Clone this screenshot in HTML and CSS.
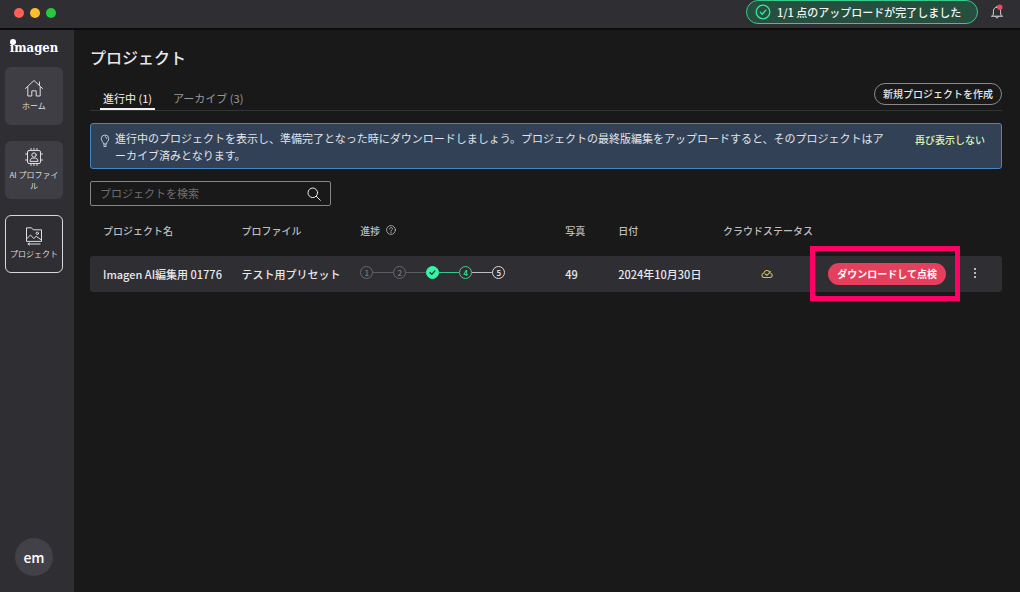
FILE: index.html
```html
<!DOCTYPE html>
<html lang="ja">
<head>
<meta charset="utf-8">
<meta name="viewport" content="width=device-width, initial-scale=1">
<title>プロジェクト - imagen</title>
<link rel="stylesheet" href="styles.css">
</head>
<body class="app">
<header class="titlebar">
  <div class="window-controls">
    <button class="dot dot-close" aria-label="閉じる"></button>
    <button class="dot dot-min" aria-label="最小化"></button>
    <button class="dot dot-max" aria-label="最大化"></button>
  </div>
  <div class="status" role="status">
    <svg class="status-icon" viewBox="0 0 16 16"><circle cx="8" cy="8" r="6.8"/><path d="M5.3 8.3l1.9 1.9 3.6-4"/></svg>
    <span>1/1 点のアップロードが完了しました</span>
  </div>
  <button class="bell" aria-label="通知">
    <svg viewBox="0 0 14 16"><path d="M7 2.2v1M1.5 12.2h11M2.6 12c.8-1 .8-2.400.8-4.600C3.400 4.800 4.900 3.200 7 3.200s3.600 1.600 3.600 4.200c0 2.200 0 3.600.8 4.600M5.600 12.600c.1 1.800 2.700 1.800 2.800 0"/><circle class="bell-dot" cx="9.800" cy="3.200" r="2.700"/></svg>
  </button>
</header>
<div class="shell">
  <nav class="sidebar">
    <div class="logo">imagen</div>
    <a class="nav-item" href="#home">
      <svg class="nav-icon" viewBox="0 0 20 20"><path d="M1.500 10.500L10 2.500l8.500 8M15.500 7.500V4M3.800 8.800V18h4v-5.200h4.400V18h4V8.800"/></svg>
      <span>ホーム</span>
    </a>
    <a class="nav-item" href="#profiles">
      <svg class="nav-icon" viewBox="0 0 20 20"><rect x="3.500" y="3.500" width="13" height="13" rx="1.500"/><path d="M7 1.500v2M10 1.500v2M13 1.500v2M7 16.500v2M10 16.500v2M13 16.500v2M1.500 7h2M1.500 13h2M16.500 7h2M16.500 13h2M6 14c0-1.900 1.300-3 4-3s4 1.100 4 3z"/><circle cx="10" cy="8" r="2.200"/></svg>
      <span>AI プロファイル</span>
    </a>
    <a class="nav-item nav-current" href="#projects" aria-current="page">
      <svg class="nav-icon" viewBox="0 0 20 20"><path d="M2.500 15V1.800h5l1.700 2h8.300V15zM2.500 13l4-4 3.200 3.500 2.500-2.200 5.300 3.700M4 18h12M5.500 17L4 18l1.500 1"/><circle cx="13.300" cy="7.300" r="1.200"/></svg>
      <span>プロジェクト</span>
    </a>
    <button class="avatar" aria-label="アカウント em">em</button>
  </nav>
  <main class="main">
    <h1 class="title">プロジェクト</h1>
    <div class="toolbar">
      <div class="tabs">
        <a class="tab tab-current" href="#active" aria-current="true">進行中 (1)</a>
        <a class="tab" href="#archive">アーカイブ (3)</a>
      </div>
      <button class="create">新規プロジェクトを作成</button>
    </div>
    <section class="notice">
      <svg class="bulb" viewBox="0 0 10 14"><path d="M3.400 9.500C3.400 8 1.300 7 1.300 4.700a3.700 3.700 0 0 1 7.400 0C8.700 7 6.600 8 6.600 9.500zM3.500 11h3M4 12.500h2M5.200 2.800c1 .2 1.500.8 1.600 1.700"/></svg>
      <p class="notice-text">進行中のプロジェクトを表示し、準備完了となった時にダウンロードしましょう。プロジェクトの最終版編集をアップロードすると、そのプロジェクトはアーカイブ済みとなります。</p>
      <button class="dismiss">再び表示しない</button>
    </section>
    <form class="search">
      <input class="search-input" type="search" placeholder="プロジェクトを検索" aria-label="プロジェクトを検索">
      <button class="search-button" type="button" aria-label="検索"><svg viewBox="0 0 14 14"><circle cx="5.800" cy="5.800" r="4.800"/><path d="M9.300 9.300L13.300 13.300"/></svg></button>
    </form>
    <table class="projects">
      <thead>
        <tr>
          <th class="col-name">プロジェクト名</th>
          <th class="col-profile">プロファイル</th>
          <th class="col-progress"><span class="with-help">進捗 <svg class="help" viewBox="0 0 10 10"><circle cx="5" cy="5" r="4.400"/><path d="M3.600 4c0-2 2.900-1.800 2.900-.2C6.500 4.800 5 4.800 5 6M5 7v.8"/></svg></span></th>
          <th class="col-photos">写真</th>
          <th class="col-date">日付</th>
          <th class="col-cloud">クラウドステータス</th>
          <th class="col-action"></th>
          <th></th>
        </tr>
      </thead>
      <tbody>
        <tr>
          <td>Imagen AI編集用 01776</td>
          <td>テスト用プリセット</td>
          <td>
            <ol class="steps">
              <li class="step">1</li>
              <li class="step">2</li>
              <li class="step step-done"><svg viewBox="0 0 10 10" aria-label="完了"><path d="M2.800 5.200l1.600 1.500 2.800-3.200"/></svg></li>
              <li class="step step-active">4</li>
              <li class="step step-next">5</li>
            </ol>
          </td>
          <td>49</td>
          <td>2024年10月30日</td>
          <td><svg class="cloud" viewBox="0 0 14 10"><path d="M9.800 2.300C7.700-.2 4 .8 3.500 3.900.3 4.400.3 8.900 3.500 9h7c3.200-.1 3.300-4 1-4.700M5 5l1.900 1.700 4.300-4.500"/></svg></td>
          <td class="action-cell"><div class="focus-box"><button class="download">ダウンロードして点検</button></div></td>
          <td><button class="more" aria-label="メニュー"><svg viewBox="0 0 4 12"><circle cx="2" cy="2" r="1"/><circle cx="2" cy="6" r="1"/><circle cx="2" cy="10" r="1"/></svg></button></td>
        </tr>
      </tbody>
    </table>
  </main>
</div>
</body>
</html>
```
FILE: styles.css
```css
* { box-sizing: border-box; }
.app {
  margin: 0;
  min-height: 100vh;
  display: flex;
  flex-direction: column;
  background: #191919;
  color: #e8e8ea;
  font: 11px/17px "Noto Sans CJK JP", "Noto Sans", sans-serif;
}
button, input { font: inherit; color: inherit; }
button { padding: 0; border: 0; background: none; cursor: pointer; }
a { color: inherit; text-decoration: none; }
svg { display: block; fill: none; stroke: currentColor; stroke-linecap: round; stroke-linejoin: round; }

.titlebar {
  display: flex;
  align-items: flex-start;
  height: 30px;
  padding: 0 16px 0 14px;
  background: #2f2e33;
  border-bottom: 2px solid #0c0c0d;
}
.window-controls { display: flex; gap: 6px; padding-top: 8px; margin-right: auto; }
.dot { width: 10px; height: 10px; border-radius: 50%; }
.dot-close { background: #ff5f57; }
.dot-min { background: #febc2e; }
.dot-max { background: #28c840; }
.status {
  display: flex;
  align-items: center;
  gap: 6px;
  height: 24px;
  min-width: 232px;
  padding: 0 10px 0 8px;
  border: 1px solid #35c98a;
  border-radius: 12px;
  background: #25503f;
  color: #f0f4f2;
  font-weight: 500;
}
.status-icon { width: 16px; height: 16px; color: #3be698; stroke-width: 1.3; }
.bell { width: 14px; height: 16px; margin: 4px 0 0 12px; color: #dcdcde; }
.bell-dot { fill: #f9405c; stroke: none; }

.shell { display: flex; flex: 1; }
.sidebar {
  display: flex;
  flex-direction: column;
  align-items: center;
  gap: 16px;
  width: 74px;
  flex: none;
  padding: 8px 6px 16px 0;
  background: #2f2e33;
}
.logo {
  position: relative;
  height: 20px;
  margin-bottom: -7px;
  color: #fff;
  font: bold 13px/20px "DejaVu Serif Condensed", "DejaVu Serif", serif;
}
.logo::before {
  content: "";
  position: absolute;
  left: 0;
  top: 1px;
  width: 6px;
  height: 6px;
  border-radius: 50%;
  background: #fff;
}
.nav-item {
  display: flex;
  flex-direction: column;
  align-items: center;
  justify-content: center;
  gap: 2px;
  width: 58px;
  height: 58px;
  padding: 0 3px 3px;
  border-radius: 6px;
  background: #3f3e45;
  color: #dededf;
  font-size: 8px;
  line-height: 11px;
  text-align: center;
}
.nav-icon { width: 20px; height: 20px; flex: none; }
.nav-current { border: 1px solid #d8d8d8; background: none; }
.avatar {
  width: 38px;
  height: 38px;
  margin-top: auto;
  border-radius: 50%;
  background: #424148;
  color: #fff;
  font-size: 14px;
  font-weight: 500;
}

.main { flex: 1; min-width: 0; padding: 15px 18px 16px 16px; }
.title { margin: 0 0 13px; font-size: 16px; line-height: 24px; font-weight: 500; }
.toolbar {
  display: flex;
  justify-content: space-between;
  align-items: flex-start;
  height: 29px;
  border-bottom: 1px solid #343436;
}
.tabs { display: flex; align-self: stretch; gap: 15px; padding-left: 10px; }
.tab { padding: 8px 3px 0; color: #99999b; }
.tab-current { border-bottom: 2px solid #f2f2f2; color: #f2f2f2; }
.create {
  height: 22px;
  padding: 0 8px;
  margin-top: 1px;
  border: 1px solid #8a8a8c;
  border-radius: 11px;
  font-size: 10px;
  line-height: 20px;
  font-weight: 500;
}
.notice {
  display: flex;
  align-items: flex-start;
  margin-top: 12px;
  padding: 6px 16px 4px 9px;
  border: 1px solid #4487c4;
  border-radius: 3px;
  background: #324156;
}
.bulb { width: 10px; height: 14px; margin: 4px 5px 0 0; color: #d0d6dd; stroke-width: .9; }
.notice-text { flex: 1; margin: 0 24px 0 0; color: #e0e4e9; }
.dismiss { color: #dcf3b2; font-size: 10px; line-height: 20px; font-weight: 500; white-space: nowrap; }
.search {
  display: flex;
  align-items: center;
  width: 241px;
  height: 25px;
  margin-top: 12px;
  padding: 0 9px;
  border: 1px solid #858587;
  border-radius: 2px;
}
.search-input { flex: 1; min-width: 0; padding: 0; border: 0; background: none; outline: 0; }
.search-input::placeholder { color: #6f6f71; opacity: 1; }
.search-button { width: 14px; height: 14px; }

.projects { width: 100%; margin-top: 8px; table-layout: fixed; border-collapse: separate; border-spacing: 0; }
.projects th {
  height: 42px;
  padding: 0 0 10px 13px;
  color: #bdbdbf;
  font-size: 10px;
  font-weight: 500;
  text-align: left;
  white-space: nowrap;
}
.projects td { height: 36px; padding: 0 0 0 13px; background: #2f2e33; font-weight: 500; white-space: nowrap; }
.projects td:first-child { border-radius: 3px 0 0 3px; }
.projects td:last-child { border-radius: 0 3px 3px 0; }
.col-name { width: 15.2%; }
.col-profile { width: 13%; }
.col-progress { width: 22.5%; }
.col-photos { width: 5.8%; }
.col-date { width: 11.5%; }
.col-cloud { width: 11%; }
.col-action { width: 16.4%; }
.with-help { display: flex; align-items: center; gap: 6px; }
.help { width: 10px; height: 10px; stroke-width: .8; }

.steps { display: flex; gap: 20px; margin: 0 0 4px; padding: 0; list-style: none; }
.step {
  position: relative;
  width: 13px;
  height: 13px;
  border: 1px solid #68686c;
  border-radius: 50%;
  color: #77777b;
  font-size: 8px;
  line-height: 11px;
  text-align: center;
}
.step + .step::before {
  content: "";
  position: absolute;
  right: 12px;
  top: 5px;
  width: 20px;
  height: 1px;
  background: #5b5b5f;
}
.step-done { border-color: #36f5a4; background: #36f5a4; color: #1e3029; }
.step-done svg { stroke-width: 1.2; }
.step-active { border-color: #36d692; color: #36e69a; }
.step + .step-active::before { background: #36c588; }
.step-next { border-color: #dcdcde; color: #f2f2f2; }
.step + .step-next::before { background: #bdbdbf; }

.cloud { width: 12px; height: 10px; margin-left: 38px; color: #dcb962; stroke-width: 1.2; }
.projects .action-cell { padding: 0; }
.focus-box { position: relative; display: flex; justify-content: center; padding-left: 4px; }
.focus-box::before {
  content: "";
  position: absolute;
  inset: -17px 0 -16px;
  border: 5px solid #ff0066;
  pointer-events: none;
}
.download {
  height: 22px;
  padding: 0 9px;
  border-radius: 11px;
  background: #e5405b;
  color: #fff;
  font-size: 10px;
  line-height: 20px;
  font-weight: 700;
}
.more { width: 4px; height: 12px; }
.more svg { fill: #e8e8ea; stroke: none; }
```
